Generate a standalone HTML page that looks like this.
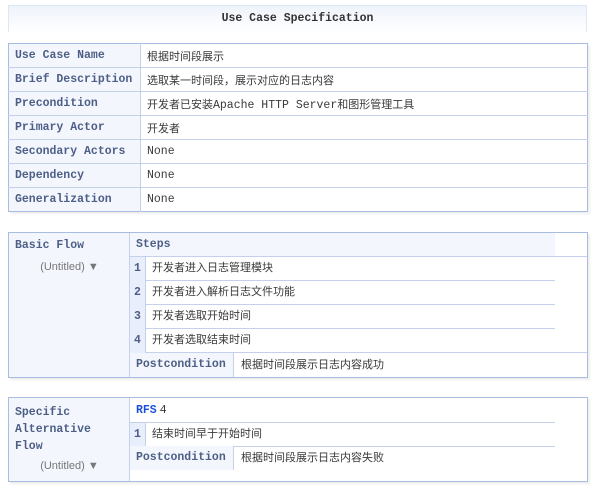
<!DOCTYPE html>
<html><head><meta charset="utf-8"><style>
*{margin:0;padding:0;box-sizing:border-box}
body{width:602px;height:493px;background:#fff;position:relative;font-family:"Liberation Sans","Noto Sans CJK SC",sans-serif;font-size:11px;color:#3a3a3a;overflow:hidden}
.abs{position:absolute}
.lbl{font-family:"Liberation Mono","Noto Sans CJK SC",monospace;font-weight:bold;color:#4d5f86;font-size:11.5px}
.mono{font-family:"Liberation Mono","Noto Sans CJK SC",monospace;font-size:11.5px}
.title{left:8px;top:5px;width:579px;height:27px;border:1px solid #dde6f3;border-bottom:none;background:linear-gradient(#eef3fb,#fff);text-align:center;line-height:26px}
table{border-collapse:collapse}
.t1{left:8px;top:43px;width:580px;border:1px solid #a9bde3;box-shadow:2px 2px 2px #eee}
.t1 td{height:24px;border-bottom:1px solid #c5d1ea;padding-left:6px;vertical-align:middle}
.t1 td.k{width:132px;background:#f3f6fd;border-right:1px solid #c5d1ea}
.box{border:1px solid #a9bde3;box-shadow:2px 2px 2px #eee;background:#fff}
.left{background:#f3f6fd;border-right:1px solid #c5d1ea}
.un{color:#777;font-size:11px;text-align:center}
.row{position:absolute;height:24px;line-height:23px;border-bottom:1px solid #c5d1ea}
.num{position:absolute;width:16px;background:#e8eefb;border-right:1px solid #c5d1ea;text-align:center;height:24px;line-height:23px}
</style></head><body>
<div class="abs title lbl" style="color:#333">Use Case Specification</div>
<table class="abs t1">
<tr><td class="k lbl">Use Case Name</td><td>根据时间段展示</td></tr>
<tr><td class="k lbl">Brief Description</td><td>选取某一时间段，展示对应的日志内容</td></tr>
<tr><td class="k lbl">Precondition</td><td>开发者已安装<span class="mono">Apache HTTP Server</span>和图形管理工具</td></tr>
<tr><td class="k lbl">Primary Actor</td><td>开发者</td></tr>
<tr><td class="k lbl">Secondary Actors</td><td class="mono">None</td></tr>
<tr><td class="k lbl">Dependency</td><td class="mono">None</td></tr>
<tr><td class="k lbl" style="border-bottom:none">Generalization</td><td class="mono" style="border-bottom:none">None</td></tr>
</table>

<div class="abs box" style="left:8px;top:232px;width:580px;height:146px">
 <div class="abs left" style="left:0;top:0;width:121px;height:144px">
  <div class="abs lbl" style="left:6px;top:6px">Basic Flow</div>
  <div class="abs un" style="left:0;top:28px;width:121px">(Untitled) ▼</div>
 </div>
 <div class="row lbl" style="left:121px;top:0;width:425px;background:#f3f6fd;padding-left:6px">Steps</div>
 <div class="row" style="left:546px;top:0;width:32px"></div>
 <div class="row" style="left:121px;top:24px;width:425px"><div class="num lbl" style="left:0;top:0">1</div><span style="margin-left:22px">开发者进入日志管理模块</span></div>
 <div class="row" style="left:121px;top:48px;width:425px"><div class="num lbl" style="left:0;top:0">2</div><span style="margin-left:22px">开发者进入解析日志文件功能</span></div>
 <div class="row" style="left:121px;top:72px;width:425px"><div class="num lbl" style="left:0;top:0">3</div><span style="margin-left:22px">开发者选取开始时间</span></div>
 <div class="row" style="left:121px;top:96px;width:457px"><div class="num lbl" style="left:0;top:0">4</div><span style="margin-left:22px">开发者选取结束时间</span></div>
 <div class="abs" style="left:121px;top:120px;width:457px;height:24px;line-height:24px">
  <div class="abs lbl" style="left:0;top:0;width:104px;height:24px;background:#f3f6fd;border-right:1px solid #c5d1ea;padding-left:6px">Postcondition</div>
  <div class="abs" style="left:111px;top:0">根据时间段展示日志内容成功</div>
 </div>
</div>

<div class="abs box" style="left:8px;top:397px;width:580px;height:85px">
 <div class="abs left" style="left:0;top:0;width:121px;height:83px">
  <div class="abs lbl" style="left:6px;top:6px;line-height:17px">Specific<br>Alternative<br>Flow</div>
  <div class="abs un" style="left:0;top:62px;width:121px">(Untitled) ▼</div>
 </div>
 <div class="abs" style="left:127px;top:0;line-height:24px"><span class="lbl" style="color:#1a4fd8">RFS</span> <span class="mono">4</span></div>
 <div class="row" style="left:121px;top:24px;width:425px;border-top:1px solid #c5d1ea;height:25px"><div class="num lbl" style="left:0;top:0">1</div><span style="margin-left:22px">结束时间早于开始时间</span></div>
 <div class="abs" style="left:121px;top:48px;width:457px;height:24px;line-height:24px">
  <div class="abs lbl" style="left:0;top:0;width:104px;height:24px;background:#f3f6fd;border-right:1px solid #c5d1ea;padding-left:6px">Postcondition</div>
  <div class="abs" style="left:111px;top:0">根据时间段展示日志内容失败</div>
 </div>
</div>
</body></html>
